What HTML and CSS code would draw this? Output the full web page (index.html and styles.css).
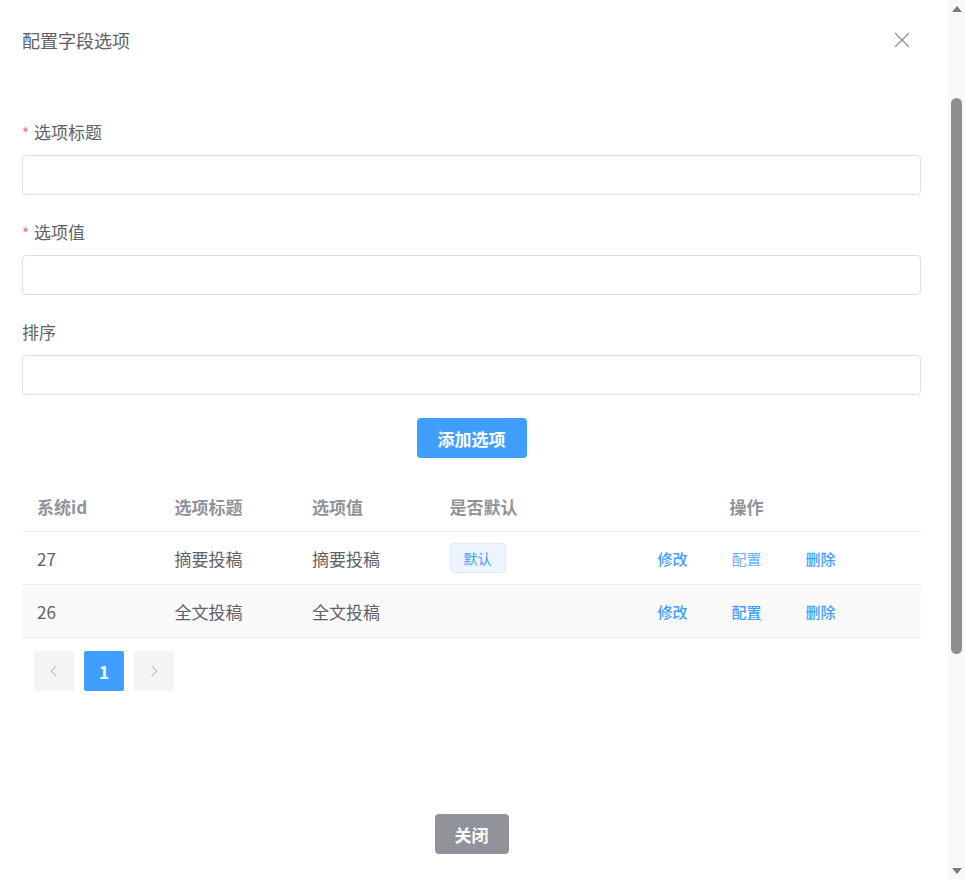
FILE: index.html
```html
<!DOCTYPE html>
<html lang="zh-CN">
<head>
    <meta charset="UTF-8">
    <meta name="viewport" content="width=device-width, initial-scale=1.0">
    <title>配置字段选项</title>
    <link rel="stylesheet" href="styles.css">
</head>
<body>
    <div class="page" id="page">
        <div class="dialog">
            <div class="dialog-header">
                <span class="dialog-title">配置字段选项</span>
                <button class="dialog-close" aria-label="关闭">
                    <svg width="16" height="16" viewBox="0 0 16 16">
                        <path d="M1 1 L15 15 M15 1 L1 15" stroke="#909399" stroke-width="1.4" fill="none"/>
                    </svg>
                </button>
            </div>

            <div class="dialog-body">
                <div class="form-item">
                    <label class="form-label required">选项标题</label>
                    <input type="text" class="form-input">
                </div>
                <div class="form-item">
                    <label class="form-label required">选项值</label>
                    <input type="text" class="form-input">
                </div>
                <div class="form-item">
                    <label class="form-label">排序</label>
                    <input type="text" class="form-input">
                </div>

                <div class="form-actions">
                    <button class="btn btn-primary">添加选项</button>
                </div>

                <div class="table">
                    <div class="table-row table-head">
                        <div class="cell">系统id</div>
                        <div class="cell">选项标题</div>
                        <div class="cell">选项值</div>
                        <div class="cell">是否默认</div>
                        <div class="cell cell-center">操作</div>
                    </div>
                    <div class="table-row">
                        <div class="cell">27</div>
                        <div class="cell">摘要投稿</div>
                        <div class="cell">摘要投稿</div>
                        <div class="cell"><span class="tag">默认</span></div>
                        <div class="cell cell-center ops">
                            <a class="link">修改</a>
                            <a class="link link-hover">配置</a>
                            <a class="link">删除</a>
                        </div>
                    </div>
                    <div class="table-row striped">
                        <div class="cell">26</div>
                        <div class="cell">全文投稿</div>
                        <div class="cell">全文投稿</div>
                        <div class="cell"></div>
                        <div class="cell cell-center ops">
                            <a class="link">修改</a>
                            <a class="link">配置</a>
                            <a class="link">删除</a>
                        </div>
                    </div>
                </div>

                <div class="pager">
                    <button class="pager-btn">
                        <svg width="8" height="12" viewBox="0 0 8 12">
                            <path d="M6 1 L1.5 6 L6 11" stroke="#c0c4cc" stroke-width="1.2" fill="none"/>
                        </svg>
                    </button>
                    <button class="pager-btn active">1</button>
                    <button class="pager-btn">
                        <svg width="8" height="12" viewBox="0 0 8 12">
                            <path d="M2 1 L6.5 6 L2 11" stroke="#c0c4cc" stroke-width="1.2" fill="none"/>
                        </svg>
                    </button>
                </div>
            </div>

            <div class="dialog-footer">
                <button class="btn btn-info">关闭</button>
            </div>
        </div>
    </div>

    <!-- window scrollbar -->
    <div class="scrollbar">
        <div class="scroll-arrow">
            <svg width="10" height="6" viewBox="0 0 10 6"><path d="M5 0 L10 6 L0 6 Z" fill="#7a7a7a"/></svg>
        </div>
        <div class="scroll-track">
            <div class="scroll-thumb"></div>
        </div>
        <div class="scroll-arrow">
            <svg width="10" height="6" viewBox="0 0 10 6"><path d="M0 0 L10 0 L5 6 Z" fill="#7a7a7a"/></svg>
        </div>
    </div>

    <script>
        // dialog is opened part-way down the page
        document.getElementById('page').scrollTop = 131;
    </script>
</body>
</html>
```

FILE: styles.css
```css
html, body {
    margin: 0;
    padding: 0;
    background: #fff;
}
body {
    font-family: "Noto Sans CJK SC", "Noto Sans", sans-serif;
    color: #606266;
    display: flex;
    height: 100vh;
    overflow: hidden;
}
.page {
    flex: 1;
    height: 100vh;
    overflow: hidden;
}
.scrollbar {
    width: 17px;
    background: #f8f8f8;
    display: flex;
    flex-direction: column;
}
.scroll-arrow {
    height: 17px;
    display: flex;
    align-items: center;
    justify-content: center;
}
.scroll-track {
    flex: 1;
    display: flex;
    justify-content: center;
}
.scroll-thumb {
    width: 11px;
    height: 556px;
    margin-top: 81px;
    background: #8f8f8f;
    border-radius: 6px;
}
.dialog {
    padding: 131px 27px 332px 22px;
}
.dialog-header {
    display: flex;
    justify-content: space-between;
    align-items: center;
    padding-top: 28px;
    height: 24px;
}
.dialog-title {
    font-size: 18px;
    line-height: 24px;
    color: #606266;
}
.dialog-close {
    border: none;
    background: none;
    padding: 0;
    margin-right: 11px;
    width: 16px;
    height: 16px;
    display: flex;
    cursor: pointer;
}
.dialog-body {
    padding-top: 68px;
}
.form-item {
    margin-bottom: 25px;
}
.form-label {
    display: block;
    height: 24px;
    font-size: 17px;
    line-height: 24px;
    margin-bottom: 11px;
    color: #606266;
}
.form-label.required::before {
    content: "*";
    color: #f56c6c;
    margin-right: 5px;
    font-size: 15px;
}
.form-input {
    display: block;
    box-sizing: border-box;
    width: 100%;
    height: 40px;
    border: 1px solid #dcdfe6;
    border-radius: 4px;
    padding: 0 15px;
    font-size: 16px;
    outline: none;
}
.form-actions {
    display: flex;
    justify-content: center;
    margin-top: -2px;
}
.btn {
    display: block;
    border: none;
    border-radius: 4px;
    height: 40px;
    padding: 0;
    color: #fff;
    font-family: inherit;
    font-size: 17px;
    font-weight: bold;
    cursor: pointer;
}
.btn-primary {
    background: #409eff;
    width: 110px;
}
.btn-info {
    background: #909399;
    width: 74px;
}
.table {
    margin-top: 29px;
    font-size: 17px;
}
.table-row {
    display: grid;
    grid-template-columns: repeat(4, 137.5px) 1fr;
    align-items: center;
    height: 52px;
    border-bottom: 1px solid #ebeef5;
}
.table-head {
    height: 45px;
    box-sizing: border-box;
    padding-bottom: 6px;
    color: #909399;
    font-weight: bold;
}
.striped {
    background: #fafafa;
}
.cell {
    padding: 0 15px;
}
.cell-center {
    text-align: center;
}
.ops {
    display: flex;
    justify-content: center;
    gap: 44px;
}
.link {
    color: #409eff;
    font-size: 15px;
    font-weight: 500;
    cursor: pointer;
}
.link-hover {
    color: #66b1ff;
    font-weight: normal;
}
.tag {
    display: inline-block;
    height: 30px;
    line-height: 28px;
    box-sizing: border-box;
    padding: 0 13px;
    font-size: 14px;
    color: #409eff;
    background: #ecf5ff;
    border: 1px solid #d9ecff;
    border-radius: 4px;
    vertical-align: middle;
}
.pager {
    display: flex;
    gap: 10px;
    margin-top: 13px;
    padding-left: 12px;
}
.pager-btn {
    width: 40px;
    height: 40px;
    border: none;
    border-radius: 2px;
    background: #f4f4f5;
    display: flex;
    align-items: center;
    justify-content: center;
    font-family: inherit;
    font-size: 17px;
    font-weight: bold;
    color: #606266;
    padding: 0;
}
.pager-btn.active {
    background: #409eff;
    color: #fff;
}
.dialog-footer {
    display: flex;
    justify-content: center;
    margin-top: 123px;
}
```
